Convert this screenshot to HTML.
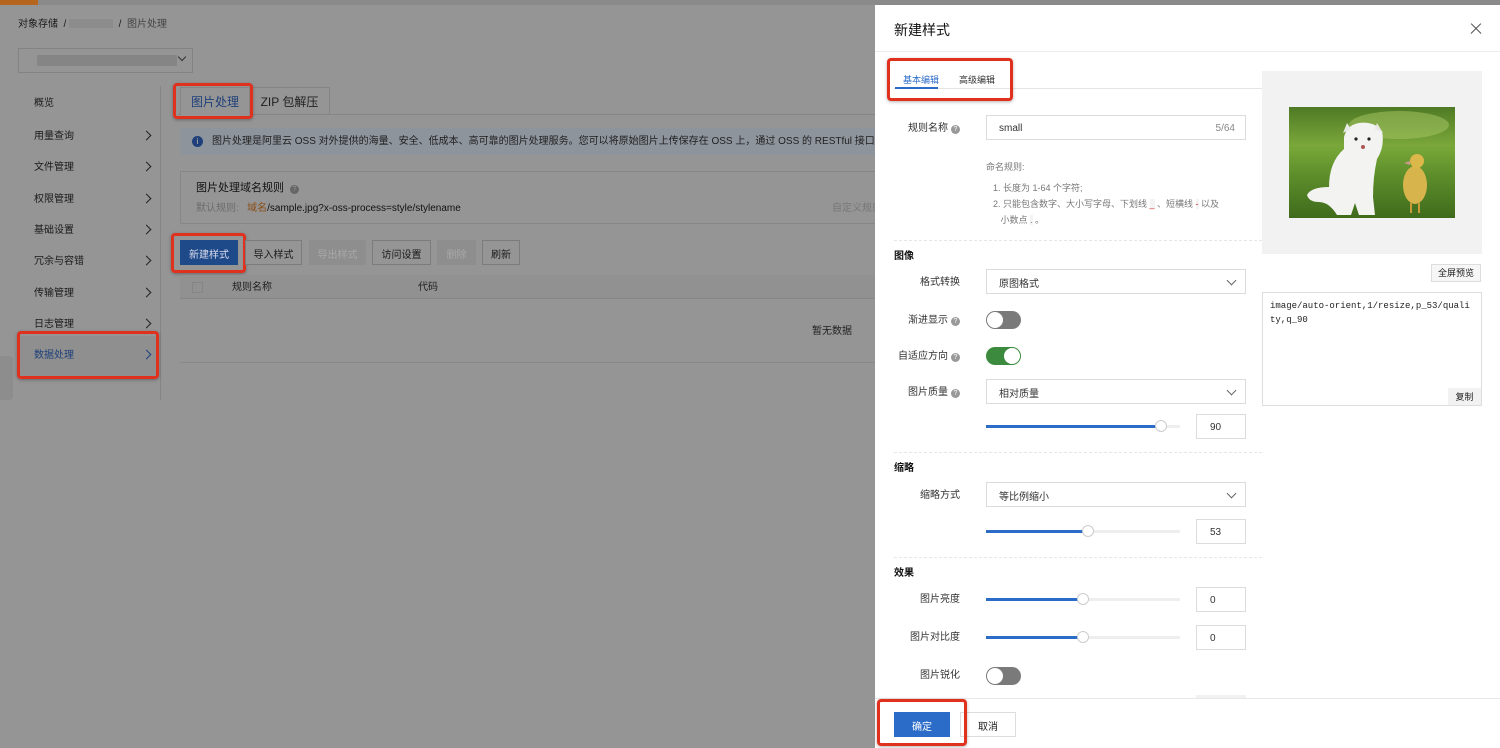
<!DOCTYPE html><html><head><meta charset="utf-8"><style>
*{box-sizing:border-box;margin:0;padding:0}
body{width:1500px;height:748px;overflow:hidden;background:#959595;font-family:"Liberation Sans","Noto Sans CJK SC",sans-serif;font-size:10px;color:#1f1f1f;position:relative}
.a{position:absolute}
.red{position:absolute;border:3px solid #e0301e;border-radius:4px;box-shadow:0 1px 3px rgba(0,0,0,.3)}
.nav{position:absolute;left:34px;font-size:10px;color:#1a1a1a;line-height:16px}
.chev{position:absolute;left:143px;width:7px;height:7px;border-right:1.5px solid #222;border-top:1.5px solid #222;transform:rotate(45deg)}
.btn{position:absolute;top:240px;height:25px;border:1px solid #7c7c7c;background:#959595;font-size:10px;display:flex;align-items:center;justify-content:center;color:#1a1a1a;padding-top:2px}
.lbl{position:absolute;font-size:10px;color:#333;text-align:right;width:80px;left:880px;line-height:16px;margin-top:1px}
.inp{position:absolute;left:986px;width:260px;height:25px;border:1px solid #dcdcdc;background:#fff;font-size:10px;display:flex;align-items:center;padding-left:12px;padding-top:2px;color:#333}
.dd::after{content:"";position:absolute;right:10px;top:7px;width:6px;height:6px;border-right:1px solid #666;border-bottom:1px solid #666;transform:rotate(45deg)}
.q{display:inline-block;width:9px;height:9px;border-radius:50%;background:#999;color:#fff;font-size:7px;line-height:9px;text-align:center;vertical-align:0;margin-left:3px}
.sec{position:absolute;left:894px;font-size:10px;font-weight:bold;color:#111;line-height:16px}
.dash{position:absolute;left:894px;width:368px;border-top:1px dashed #e6e6e6}
.track{position:absolute;left:986px;width:194px;height:3px;background:#eee}
.track i{position:absolute;left:0;top:0;height:3px;background:#2b6cc8}
.knob{position:absolute;width:12px;height:12px;border-radius:50%;background:#fff;border:1px solid #ccc;top:-5px}
.num{position:absolute;left:1196px;width:50px;height:25px;border:1px solid #dcdcdc;font-size:10px;display:flex;align-items:center;padding-left:13px;padding-top:2px;color:#333}
.sw{position:absolute;left:986px;width:35px;height:18px;border-radius:9px;background:#7a7a7a}
.sw b{position:absolute;top:1px;left:1px;width:16px;height:16px;border-radius:50%;background:#fff}
.t{line-height:16px}
</style></head><body>
<div class="a" style="left:0;top:0;width:1500px;height:5px;background:#8a8a8a"></div>
<div class="a" style="left:0;top:0;width:38px;height:5px;background:#b5651d"></div>
<div class="a t" style="left:18px;top:17px;font-size:10px;color:#1a1a1a">对象存储 &nbsp;/ <span style="display:inline-block;width:44px;height:9px;background:#8c8c8c;vertical-align:-1px"></span> &nbsp;/ &nbsp;<span style="color:#444">图片处理</span></div>
<div class="a" style="left:18px;top:48px;width:175px;height:25px;border:1px solid #838383"><div class="a" style="left:18px;top:6px;width:140px;height:11px;background:#858585"></div><div class="a" style="left:160px;top:5px;width:6px;height:6px;border-right:1px solid #333;border-bottom:1px solid #333;transform:rotate(45deg)"></div></div>
<div class="a" style="left:160px;top:86px;width:1px;height:314px;background:#858585"></div>
<div class="nav" style="top:96px">概览</div>
<div class="nav" style="top:129px">用量查询</div><div class="chev" style="top:132px"></div>
<div class="nav" style="top:160px">文件管理</div><div class="chev" style="top:163px"></div>
<div class="nav" style="top:192px">权限管理</div><div class="chev" style="top:195px"></div>
<div class="nav" style="top:223px">基础设置</div><div class="chev" style="top:226px"></div>
<div class="nav" style="top:254px">冗余与容错</div><div class="chev" style="top:257px"></div>
<div class="nav" style="top:286px">传输管理</div><div class="chev" style="top:289px"></div>
<div class="nav" style="top:317px">日志管理</div><div class="chev" style="top:320px"></div>
<div class="a" style="left:18px;top:336px;width:138px;height:40px;background:#8f8f8f"></div>
<div class="nav" style="top:348px;color:#1e3f7a">数据处理</div><div class="chev" style="top:351px;border-color:#1e3f7a"></div>
<div class="red" style="left:17px;top:331px;width:142px;height:48px"></div>
<div class="a" style="left:0;top:356px;width:13px;height:44px;background:#8d8d8d;border-radius:0 4px 4px 0"></div>
<div class="a" style="left:178px;top:114px;width:700px;height:1px;background:#858585"></div>
<div class="a" style="left:180px;top:87px;width:70px;height:28px;border:1px solid #858585;border-bottom:none;background:#959595;font-size:12px;line-height:29px;text-align:center;color:#1e3f7a">图片处理</div>
<div class="a" style="left:250px;top:87px;width:80px;height:28px;border:1px solid #858585;border-left:none;font-size:12px;line-height:29px;text-align:center;color:#1f1f1f">ZIP 包解压</div>
<div class="red" style="left:173px;top:83px;width:80px;height:36px"></div>
<div class="a" style="left:180px;top:128px;width:700px;height:27px;background:#8e949c;font-size:10px;line-height:28px;padding-left:32px;color:#1f1f1f;white-space:nowrap;overflow:hidden">图片处理是阿里云 OSS 对外提供的海量、安全、低成本、高可靠的图片处理服务。您可以将原始图片上传保存在 OSS 上，通过 OSS 的 RESTful 接口，在任何时间</div>
<div class="a" style="left:192px;top:136px;width:11px;height:11px;border-radius:50%;background:#1e3f7a;color:#959595;font-size:8px;line-height:11px;text-align:center;font-weight:bold">i</div>
<div class="a" style="left:180px;top:171px;width:700px;height:53px;border:1px solid #868686"></div>
<div class="a" style="left:196px;top:180px;font-size:11px;color:#111;line-height:16px">图片处理域名规则 <span class="q" style="background:#666;color:#959595">?</span></div>
<div class="a t" style="left:196px;top:201px;font-size:10px;color:#6c6c6c">默认规则: &nbsp; <span style="color:#8a4d17">域名</span><span style="color:#111">/sample.jpg?x-oss-process=style/stylename</span></div>
<div class="a t" style="left:832px;top:201px;font-size:10px;color:#777">自定义规则</div>
<div class="btn" style="left:180px;width:58px;background:#1e4a8a;border-color:#1e4a8a;color:#dde">新建样式</div>
<div class="red" style="left:171px;top:233px;width:75px;height:40px"></div>
<div class="btn" style="left:245px;width:57px">导入样式</div>
<div class="btn" style="left:309px;width:57px;background:#8e8e8e;border-color:#8e8e8e;color:#a8a8a8">导出样式</div>
<div class="btn" style="left:372px;width:59px">访问设置</div>
<div class="btn" style="left:437px;width:39px;background:#8e8e8e;border-color:#8e8e8e;color:#a8a8a8">删除</div>
<div class="btn" style="left:482px;width:38px">刷新</div>
<div class="a" style="left:180px;top:275px;width:700px;height:24px;background:#919191;border-bottom:1px solid #868686"></div>
<div class="a" style="left:192px;top:282px;width:11px;height:11px;border:1px solid #858585"></div>
<div class="a t" style="left:232px;top:280px;font-size:10px">规则名称</div>
<div class="a t" style="left:418px;top:280px;font-size:10px">代码</div>
<div class="a t" style="left:812px;top:324px;font-size:10px">暂无数据</div>
<div class="a" style="left:180px;top:362px;width:700px;height:1px;background:#888"></div>
<!-- drawer -->
<div class="a" style="left:875px;top:5px;width:625px;height:743px;background:#fff"></div>
<div class="a" style="left:894px;top:20px;font-size:14px;color:#111;line-height:20px">新建样式</div>
<div class="a" style="left:1469px;top:28px;width:14px;height:1.3px;background:#555;transform:rotate(45deg)"></div>
<div class="a" style="left:1469px;top:28px;width:14px;height:1.3px;background:#555;transform:rotate(-45deg)"></div>
<div class="a" style="left:875px;top:51px;width:625px;height:1px;background:#ececec"></div>
<div class="a" style="left:894px;top:88px;width:368px;height:1px;background:#e5e5e5"></div>
<div class="a" style="left:903px;top:73px;font-size:9px;color:#2b6cc8;line-height:14px">基本编辑</div>
<div class="a" style="left:895px;top:87px;width:43px;height:2px;background:#2b6cc8"></div>
<div class="a" style="left:959px;top:73px;font-size:9px;color:#333;line-height:14px">高级编辑</div>
<div class="red" style="left:887px;top:58px;width:126px;height:43px"></div>
<div class="lbl" style="top:120px">规则名称<span class="q">?</span></div>
<div class="inp" style="top:115px">small<span style="position:absolute;right:10px;color:#888">5/64</span></div>
<div class="a" style="left:986px;top:160px;font-size:9px;color:#777;line-height:14px">命名规则:</div>
<div class="a" style="left:993px;top:180px;font-size:9px;color:#777;line-height:16px;width:260px">1. 长度为 1-64 个字符;<br>2. 只能包含数字、大小写字母、下划线 <span style="background:#f3f3f3;color:#c33">_</span> 、短横线 <span style="background:#f3f3f3;color:#c33">-</span> 以及<br>&nbsp;&nbsp;&nbsp;小数点 <span style="background:#f3f3f3">.</span> 。</div>
<div class="dash" style="top:240px"></div>
<div class="sec" style="top:249px">图像</div>
<div class="lbl" style="top:274px">格式转换</div>
<div class="inp dd" style="top:269px">原图格式</div>
<div class="lbl" style="top:312px">渐进显示<span class="q">?</span></div>
<div class="sw" style="top:311px"><b></b></div>
<div class="lbl" style="top:348px">自适应方向<span class="q">?</span></div>
<div class="sw" style="top:347px;background:#3c8a3e"><b style="left:18px"></b></div>
<div class="lbl" style="top:384px">图片质量<span class="q">?</span></div>
<div class="inp dd" style="top:379px">相对质量</div>
<div class="track" style="top:425px"><i style="width:174px"></i><div class="knob" style="left:169px"></div></div>
<div class="num" style="top:414px">90</div>
<div class="dash" style="top:452px"></div>
<div class="sec" style="top:461px">缩略</div>
<div class="lbl" style="top:487px">缩略方式</div>
<div class="inp dd" style="top:482px">等比例缩小</div>
<div class="track" style="top:530px"><i style="width:98px"></i><div class="knob" style="left:96px"></div></div>
<div class="num" style="top:519px">53</div>
<div class="dash" style="top:557px"></div>
<div class="sec" style="top:566px">效果</div>
<div class="lbl" style="top:591px">图片亮度</div>
<div class="track" style="top:598px"><i style="width:93px"></i><div class="knob" style="left:91px"></div></div>
<div class="num" style="top:587px">0</div>
<div class="lbl" style="top:629px">图片对比度</div>
<div class="track" style="top:636px"><i style="width:93px"></i><div class="knob" style="left:91px"></div></div>
<div class="num" style="top:625px">0</div>
<div class="lbl" style="top:667px">图片锐化</div>
<div class="sw" style="top:667px"><b></b></div>
<div class="a" style="left:1196px;top:695px;width:50px;height:4px;background:#f2f2f2"></div>
<!-- right preview -->
<div class="a" style="left:1262px;top:71px;width:220px;height:183px;background:#f2f2f2"></div>
<div class="a" style="left:1289px;top:107px;width:166px;height:111px;overflow:hidden;background:linear-gradient(180deg,#4f7a25 0%,#7aa83a 35%,#5e8f2b 60%,#3f6b1c 100%)">
<svg width="166" height="111" viewBox="0 0 166 111"><ellipse cx="110" cy="18" rx="50" ry="14" fill="#a8c866" opacity=".5"/>
<path d="M18 88 Q22 80 40 80 Q40 55 55 42 L55 30 Q58 18 70 16 Q85 14 93 24 Q96 40 88 52 Q84 70 84 90 L86 108 L70 108 L66 96 L62 108 L48 108 Q40 95 30 95 Q20 95 18 88Z" fill="#f3f3f1"/>
<path d="M58 16 L54 26 L62 22Z M88 16 L94 26 L86 22Z" fill="#e8e8e6"/>
<circle cx="67" cy="32" r="1.6" fill="#222"/><circle cx="80" cy="32" r="1.6" fill="#222"/><circle cx="74" cy="40" r="2" fill="#a55"/>
<ellipse cx="126" cy="78" rx="12" ry="19" fill="#d8b44c"/><circle cx="128" cy="54" r="7" fill="#dcb84a"/><path d="M121 54 l-6 2 l6 2z" fill="#c98"/><path d="M122 96 l0 10 M130 96 l0 10" stroke="#c99b3a" stroke-width="2"/></svg></div>
<div class="a" style="left:1431px;top:264px;width:50px;height:18px;border:1px solid #ddd;background:#f6f6f6;font-size:9px;line-height:17px;text-align:center;color:#222">全屏预览</div>
<div class="a" style="left:1262px;top:292px;width:220px;height:114px;border:1px solid #ddd;font-family:'Liberation Mono',monospace;font-size:9px;line-height:14px;padding:6px 7px;color:#222;word-break:break-all">image/auto-orient,1/resize,p_53/quality,q_90</div>
<div class="a" style="left:1448px;top:388px;width:33px;height:17px;background:#f2f2f2;font-size:9px;line-height:18px;text-align:center">复制</div>
<!-- footer -->
<div class="a" style="left:875px;top:698px;width:625px;height:1px;background:#e8e8e8"></div>
<div class="a" style="left:894px;top:712px;width:56px;height:25px;background:#2b6cc8;color:#fff;font-size:10px;display:flex;align-items:center;justify-content:center;padding-top:1px">确定</div>
<div class="a" style="left:960px;top:712px;width:56px;height:25px;border:1px solid #ddd;color:#222;font-size:10px;display:flex;align-items:center;justify-content:center;padding-top:1px">取消</div>
<div class="red" style="left:877px;top:699px;width:90px;height:47px"></div>
</body></html>
